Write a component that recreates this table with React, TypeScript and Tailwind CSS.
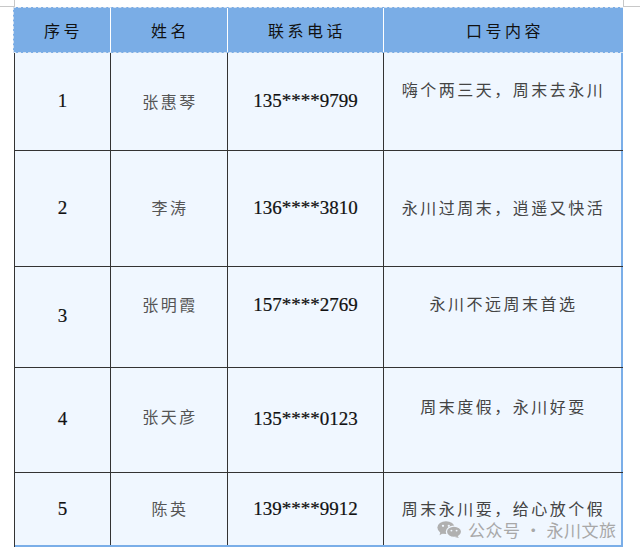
import React from "react";

const cjk = { fontFamily: '"Noto Sans CJK SC", "Noto Sans", sans-serif' };
const serif = { fontFamily: '"Liberation Serif", "DejaVu Serif", serif' };

type Row = {
  h: string;
  last?: boolean;
  num: string;
  name: string;
  phone: string;
  slogan: string;
  p: [string, string, string, string];
};

const rows: Row[] = [
  { h: "h-[98px]", num: "1", name: "张惠琴", phone: "135****9799", slogan: "嗨个两三天，周末去永川", p: ["pt-[38px]", "pt-[38px]", "pt-[38px]", "pt-[26px]"] },
  { h: "h-[116px]", num: "2", name: "李涛", phone: "136****3810", slogan: "永川过周末，逍遥又快活", p: ["pt-[47px]", "pt-[46px]", "pt-[47px]", "pt-[46px]"] },
  { h: "h-[101px]", num: "3", name: "张明霞", phone: "157****2769", slogan: "永川不远周末首选", p: ["pt-[39px]", "pt-[27px]", "pt-[28px]", "pt-[26px]"] },
  { h: "h-[105px]", num: "4", name: "张天彦", phone: "135****0123", slogan: "周末度假，永川好耍", p: ["pt-[41px]", "pt-[38px]", "pt-[41px]", "pt-[28px]"] },
  { h: "h-[74px]", last: true, num: "5", name: "陈英", phone: "139****9912", slogan: "周末永川耍，给心放个假", p: ["pt-[26px]", "pt-[25px]", "pt-[26px]", "pt-[25px]"] },
];

function WeChatIcon() {
  return (
    <svg width="25" height="17" viewBox="0 0 25 17">
      <ellipse cx="9" cy="6.6" rx="8.6" ry="6.4" fill="#b0b0b0" />
      <path d="M3.5 10.5 L2.6 14.2 L6.8 11.8 Z" fill="#b0b0b0" />
      <ellipse cx="17" cy="10.8" rx="7.6" ry="5.6" fill="#b0b0b0" stroke="#f0f7ff" strokeWidth="1.3" />
      <path d="M20.5 14.8 L21.8 17 L17.8 16 Z" fill="#b0b0b0" />
      <circle cx="6" cy="4.8" r="1.15" fill="#f0f7ff" />
      <circle cx="11.8" cy="4.8" r="1.15" fill="#f0f7ff" />
      <circle cx="14.4" cy="9.6" r="0.95" fill="#f0f7ff" />
      <circle cx="19.6" cy="9.6" r="0.95" fill="#f0f7ff" />
    </svg>
  );
}

export default function App() {
  return (
    <div className="relative w-[640px] h-[557px] bg-white overflow-hidden">
      <div className="flex h-[7px]">
        <div className="w-[15px] h-[7px] border-r border-b border-[#c8c8c8]" />
        <div className="flex-1" />
        <div className="w-[17px] h-[7px] border-l border-b border-[#c8c8c8]" />
      </div>
      <div className="ml-[13px] w-[610px]">
        {/* header */}
        <div
          className="flex h-[46px] bg-[#7aade6] border-y border-l border-dashed border-[#d6e2f0] text-[16px] text-[#111] tracking-[3.5px]"
          style={cjk}
        >
          <div className="w-[97px] border-r border-white flex items-center justify-center pl-[3px]">序号</div>
          <div className="w-[117px] border-r border-white flex items-center justify-center pl-[3px]">姓名</div>
          <div className="w-[156px] border-r border-white flex items-center justify-center pl-[3px]">联系电话</div>
          <div className="w-[239px] flex items-center justify-center pl-[3px]">口号内容</div>
        </div>
        {/* body */}
        <div className="ml-[1px] border-l border-[#333] bg-[#f0f7ff]">
          {rows.map((r) => (
            <div
              key={r.num}
              className={`flex ${r.h} ${r.last ? "border-b-2 border-[#7aaee8]" : "border-b border-[#333]"}`}
            >
              <div className={`w-[96px] border-r border-[#333] flex justify-center ${r.p[0]}`}>
                <span className="leading-[20px] text-[19px] text-[#111] [-webkit-text-stroke:0.2px_#111]" style={serif}>{r.num}</span>
              </div>
              <div className={`w-[117px] border-r border-[#333] flex justify-center ${r.p[1]}`}>
                <span className="leading-[20px] text-[16px] text-[#555] tracking-[2.5px] pl-[2px]" style={cjk}>{r.name}</span>
              </div>
              <div className={`w-[156px] border-r border-[#333] flex justify-center ${r.p[2]}`}>
                <span className="leading-[20px] text-[19px] text-[#111] [-webkit-text-stroke:0.2px_#111]" style={serif}>{r.phone}</span>
              </div>
              <div className={`w-[239px] border-r-2 border-[#7aaee8] flex justify-center ${r.p[3]}`}>
                <span className="leading-[20px] text-[16px] text-[#444] tracking-[2.5px] pl-[2px]" style={cjk}>{r.slogan}</span>
              </div>
            </div>
          ))}
        </div>
      </div>
      <div className="absolute left-[437px] top-[521px] flex items-center gap-[6px]">
        <WeChatIcon />
        <span className="text-[17px] leading-[17px] text-[#a8a8a8] tracking-[0.5px]" style={cjk}>
          公众号 · 永川文旅
        </span>
      </div>
    </div>
  );
}
